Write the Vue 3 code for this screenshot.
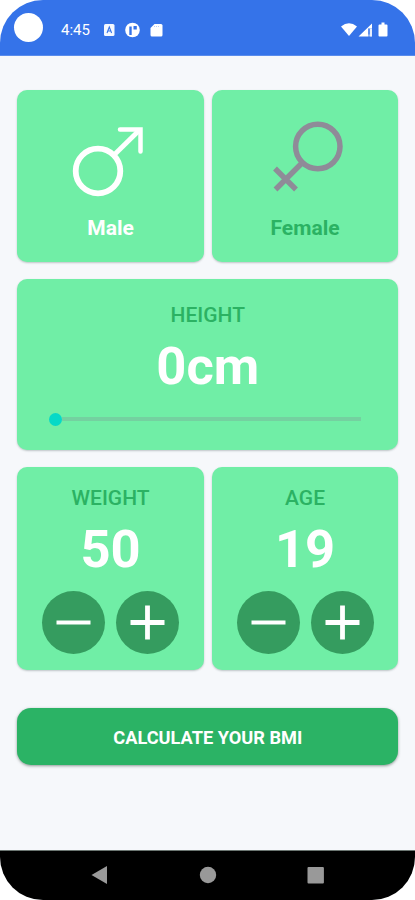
<script setup>
import { ref } from 'vue'

const gender = ref('male')
const height = ref(0)
const counters = ref([
  { label: 'WEIGHT', value: 50 },
  { label: 'AGE', value: 19 },
])
</script>

<template>
  <div class="phone">
    <header class="status">
      <span class="camera"></span>
      <span class="time">4:45</span>
      <svg class="notices" width="60" height="18" viewBox="0 0 60 18">
        <rect x="0" y="3" width="10.500" height="12" rx="1.500" fill="#f4f8ff" />
        <path d="M3 12 5.300 6 7.600 12M4 10h2.600" fill="none" stroke="#3573e9" stroke-width="1.100" />
        <circle cx="28.500" cy="9" r="7.300" fill="#fff" />
        <path d="M26.500 14V5.500" fill="none" stroke="#3573e9" stroke-width="2.400" />
        <path d="M29.500 5h3.300v3.500h-3.300z" fill="#3573e9" />
        <path d="M50.500 3h6.500q1.500 0 1.500 1.500v9.500q0 1.500-1.500 1.500h-9q-1.500 0-1.500-1.500V7z" fill="#fff" />
        <path d="M50 5.500h6" stroke="#b9cff8" stroke-width="1" stroke-dasharray="1 1" />
      </svg>
      <svg class="signals" width="48" height="18" viewBox="0 0 48 18">
        <path d="M0 5.500Q8-1 16 5.500L8 15z" fill="#fff" />
        <path d="M17.500 15.500 31 2.500v5h-4v8z" fill="#fff" />
        <path d="M27 7.500h4v8h-4z" fill="#9dbcf5" />
        <path d="M28 8v5.500" stroke="#3573e9" stroke-width="1.200" />
        <path d="M30 7.500v8" stroke="#fff" stroke-width="1.500" />
        <path d="M38.500 3.500h2V1.500h3v2h2q1 0 1 1v10q0 1-1 1h-7q-1 0-1-1v-10q0-1 1-1z" fill="#fff" />
      </svg>
    </header>

    <main class="content">
      <div class="pair">
        <section class="card gender" :class="{ active: gender === 'male' }" @click="gender = 'male'">
          <svg class="symbol" width="80" height="80" viewBox="0 0 80 80" fill="none" stroke="#fff">
            <circle cx="28" cy="53" r="22.300" stroke-width="5.800" />
            <path d="M44 37 69.500 12" stroke-width="4.800" />
            <path d="M50 11.500h20.500v22" stroke-width="4.500" stroke-linecap="round" />
          </svg>
          <span class="gender-name">Male</span>
        </section>
        <section class="card gender" :class="{ active: gender === 'female' }" @click="gender = 'female'">
          <svg class="symbol" width="80" height="80" viewBox="0 0 80 80" fill="none" stroke="#8f8b98">
            <circle cx="52.800" cy="28.500" r="22.200" stroke-width="5.500" />
            <path d="M37 45 10.500 71.500M10 50.500 31 71.500" stroke-width="5.400" />
          </svg>
          <span class="gender-name">Female</span>
        </section>
      </div>

      <section class="card tall">
        <span class="label">HEIGHT</span>
        <strong class="value">{{ height }}cm</strong>
        <div class="slider"><span class="thumb"></span><span class="track"></span></div>
      </section>

      <div class="pair">
        <section v-for="item in counters" :key="item.label" class="card counter">
          <span class="label">{{ item.label }}</span>
          <strong class="value">{{ item.value }}</strong>
          <div class="buttons">
            <button class="round" @click="item.value--">
              <svg width="63" height="63" viewBox="0 0 63 63"><path d="M14.500 31.500h34" stroke="#fff" stroke-width="4" /></svg>
            </button>
            <button class="round" @click="item.value++">
              <svg width="63" height="63" viewBox="0 0 63 63"><path d="M14.500 31.500h34M31.500 14.500v34" stroke="#fff" stroke-width="4.800" /></svg>
            </button>
          </div>
        </section>
      </div>

      <button class="calculate">CALCULATE YOUR BMI</button>
    </main>

    <nav class="navbar">
      <svg width="18" height="20" viewBox="0 0 18 20"><path d="M.500 10 16 1v18z" fill="#999" /></svg>
      <svg width="18" height="20" viewBox="0 0 18 20"><circle cx="9" cy="10" r="8.200" fill="#999" /></svg>
      <svg width="18" height="20" viewBox="0 0 18 20"><rect x=".500" y="2" width="16.400" height="16.400" rx="1" fill="#999" /></svg>
    </nav>
  </div>
</template>

<style>
body {
  background: #fff;
}
</style>

<style scoped>
.phone {
  box-sizing: border-box;
  width: 415px;
  height: 900px;
  display: flex;
  flex-direction: column;
  overflow: hidden;
  border-radius: 43px;
  background: #f6f8fb;
  font-family: Roboto, sans-serif;
}
.status {
  box-sizing: border-box;
  height: 56px;
  flex: none;
  display: flex;
  align-items: flex-start;
  padding: 13px 26px 0 14px;
  background: #3573e9;
  border-bottom: 1px solid #5a8cec;
  color: #fff;
}
.camera {
  width: 29px;
  height: 29px;
  border-radius: 50%;
  background: #fff;
}
.time {
  width: 43px;
  margin-left: 18px;
  padding-top: 8px;
  font-size: 15px;
  line-height: 19px;
}
.notices {
  margin-top: 8px;
}
.signals {
  margin: 8px 0 0 auto;
}
.content {
  flex: 1;
  display: flex;
  flex-direction: column;
  gap: 17px;
  padding: 34px 16.700px 0 17.300px;
}
.pair {
  display: grid;
  grid-template-columns: 1fr 1fr;
  gap: 8px;
}
.card {
  box-sizing: border-box;
  display: flex;
  flex-direction: column;
  align-items: center;
  border-radius: 10px;
  background: #70eea6;
  box-shadow: 0 1px 2px rgba(60, 80, 80, 0.3);
}
.gender {
  height: 171.500px;
  padding-top: 28px;
}
.symbol {
  margin-right: 1px;
}
.gender-name {
  margin-top: 18px;
  font-size: 21px;
  line-height: 24px;
  font-weight: 700;
  color: #2bb263;
}
.active .gender-name {
  color: #fff;
}
.tall {
  height: 171.500px;
  padding-top: 24px;
}
.label {
  font-size: 21px;
  line-height: 24px;
  font-weight: 500;
  color: #2bb263;
}
.value {
  margin-top: 8px;
  font-size: 52.500px;
  line-height: 62px;
  font-weight: 700;
  color: #fff;
}
.slider {
  width: 312px;
  margin: 16px 5px 0 0;
  display: flex;
  align-items: center;
}
.thumb {
  width: 13px;
  height: 13px;
  border-radius: 50%;
  background: #06d9c7;
}
.track {
  flex: 1;
  height: 4px;
  background: #74d1a0;
}
.counter {
  height: 203px;
  padding-top: 19px;
}
.buttons {
  display: flex;
  gap: 11px;
  margin-top: 11px;
}
.round {
  width: 63px;
  height: 63px;
  padding: 0;
  border: 0;
  border-radius: 50%;
  background: #359c5f;
}
.round svg {
  display: block;
}
.calculate {
  height: 57px;
  margin-top: 21px;
  padding: 2px 0 0;
  border: 0;
  border-radius: 14px;
  background: #2bb365;
  box-shadow: 0 1px 3px rgba(40, 60, 50, 0.5);
  color: #fff;
  font: 700 18.200px/22px Roboto, sans-serif;
}
.navbar {
  box-sizing: border-box;
  height: 50px;
  flex: none;
  display: flex;
  justify-content: center;
  align-items: center;
  gap: 90px;
  padding-bottom: 1px;
  border-top: 1px solid #6c7672;
  background: #000;
}
</style>
